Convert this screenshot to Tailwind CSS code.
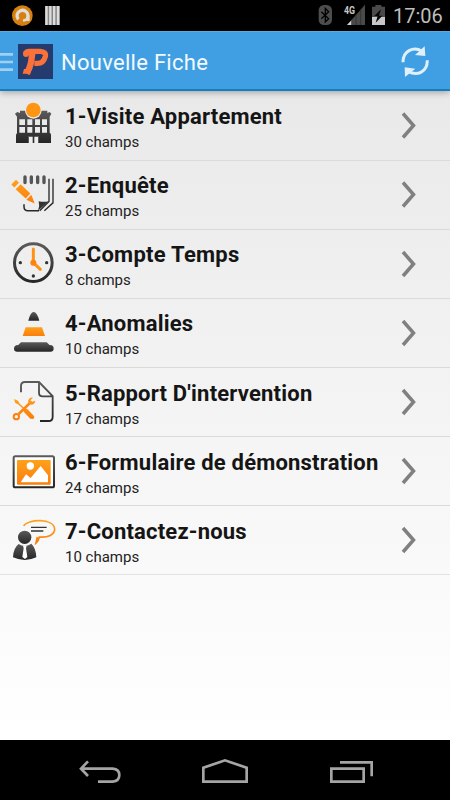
<!DOCTYPE html>
<html lang="fr">
<head>
<meta charset="utf-8">
<title>Nouvelle Fiche</title>
<script src="https://cdn.jsdelivr.net/npm/@tailwindcss/browser@4"></script>
</head>
<body class="font-[Roboto,sans-serif]">
<svg class="absolute w-0 h-0" aria-hidden="true">
  <defs>
    <linearGradient id="d" x1="0" y1="0" x2="0" y2="1"><stop offset="0" stop-color="#5a5a5a"/><stop offset="1" stop-color="#262626"/></linearGradient>
    <linearGradient id="o" x1="0" y1="0" x2="0" y2="1"><stop offset="0" stop-color="#ffa11a"/><stop offset="1" stop-color="#fb7d0c"/></linearGradient>
  </defs>
</svg>
<div class="flex h-[800px] w-[450px] flex-col overflow-hidden bg-white">
  <div class="flex h-[31px] shrink-0 items-center bg-black text-[#bebebe]">
    <svg class="h-[31px] w-[70px]" viewBox="0 0 210 93">
      <circle cx="67" cy="47" r="31" fill="#d8800f"/>
      <path d="M55 58A16.500 16.500 0 1 1 84 46V63" fill="none" stroke="#e0ddd8" stroke-width="10"/>
      <path d="M84 46A17 17 0 0 1 69 62" fill="none" stroke="#e0ddd8" stroke-width="7"/>
      <path d="M135 18h45v57h-45z" fill="#858585"/>
      <path d="M139.500 18v57M151 18v57M162.500 18v57M174 18v57" stroke="#ddd" stroke-width="7"/>
    </svg>
    <svg class="ml-[230px] h-[31px] w-[90px]" viewBox="225 0 270 93">
      <rect x="281" y="15" width="40" height="60" rx="16" fill="#4d4d4d"/>
      <path d="M289 35l22 21-10 10V25l10 10-22 21" fill="none" stroke="#000" stroke-width="4"/>
      <path d="M420 14V75H366z" fill="#4a4a4a"/>
      <path d="M380 60v15H366z" fill="#d0d0d0"/>
      <path d="M380 58v17M393 43v32M407 28v47" stroke="#292929" stroke-width="2"/>
      <text x="357" y="42" font-family="Roboto,sans-serif" font-size="31" font-weight="700" fill="#c8c8c8" textLength="33" lengthAdjust="spacingAndGlyphs">4G</text>
      <path d="M441 20h10v-5h18v5h11v31h-39z" fill="#4a4a4a"/>
      <path d="M441 51h39v24h-39z" fill="#c8c8c8"/>
      <path d="M468 28l-20 20h10l-6 20 20-21h-10z" fill="#050505"/>
    </svg>
    <div class="ml-[3px] text-[20px] leading-[31px] translate-y-[1px] whitespace-nowrap">17:06</div>
  </div>
  <header class="relative z-10 flex h-[60px] shrink-0 items-center border-t border-b-2 border-t-[#5aacdf] border-b-[#147fbd] bg-[#409fe3] shadow-[0_1px_7px_rgba(0,0,0,0.35)]">
    <svg class="h-[57px] w-[60px] shrink-0" viewBox="0 96 180 171">
      <path d="M0 163h39M0 186h39M0 209h39" stroke="#9fcff1" stroke-width="8"/>
      <rect x="54" y="132" width="105" height="105" fill="#253b6e"/>
      <g fill="none" stroke="#fa7239">
        <path d="M98 152L93 188Q89 206 80 221" stroke-width="19"/>
        <path d="M76 161Q79 154 87 154H120Q139 155 136 169Q131 190 112 190H103" stroke-width="16"/>
      </g>
      <path d="M72 207H94L91 221H68z" fill="#fa7239"/>
      <circle cx="78" cy="162" r="9" fill="#fa7239"/>
    </svg>
    <h1 class="ml-[1px] translate-y-[2px] text-[22px] tracking-[0.28px] font-normal leading-[30px] whitespace-nowrap text-[#f4f9fd]">Nouvelle Fiche</h1>
    <svg class="ml-auto mr-[15px] h-[57px] w-[40px] shrink-0" viewBox="510 96 120 171">
      <g fill="none" stroke="#e0f0fb" stroke-width="9">
        <path d="M534 187C534 151 567 139 591 154"/><path d="M607 181C607 217 577 228 550 215"/>
      </g>
      <path d="M599 139l2 29-31-3zM540 231l-1-29 32 4z" fill="#e0f0fb"/>
    </svg>
  </header>
  <main class="flex h-[649px] shrink-0 flex-col bg-linear-to-b from-[#e9e9e9] to-white">
    <ul class="pt-[0.45px]">
      <li class="flex h-[69.15px] items-center border-b border-[#dadada]">
        <svg class="h-[69px] w-[60px] shrink-0" viewBox="0 3 180 207">
          <path fill="url(#d)" fill-rule="evenodd" d="M45 71L52 66L60 69V62H142V69L149 66L154 71L149 80V129H151L153 134V159H116V138H85V159H48V134L51 129V80zM58 88V105H75V88zM82 88V105H97V88zM105 88V105H120V88zM126 88V105H141V88zM58 111V128H75V111zM82 111V128H97V111zM105 111V128H120V111zM126 111V128H141V111z"/>
          <path d="M85 134h31v25H85z" fill="#333"/>
          <path d="M87 140h11v20H87zM103 140h11v20h-11z" fill="#eee"/>
          <circle cx="100" cy="61" r="25" fill="#ececec"/><circle cx="100" cy="60" r="22" fill="#ff9513"/>
        </svg>
        <div class="ml-[5px] min-w-0 flex-1 translate-y-[2px]"><h2 class="text-[22px] tracking-[0.2px] leading-[28px] font-bold whitespace-nowrap text-[#151515]">1-Visite Appartement</h2><p class="text-[15px] leading-[22px] text-[#222]">30 champs</p></div>
        <svg class="mr-[30px] h-[30px] w-[20px] shrink-0 -translate-y-[0.5px]" viewBox="0 0 20 30"><path d="M3 3L13.500 15L3 27" fill="none" stroke="#808080" stroke-width="3.500"/></svg>
      </li>
      <li class="flex h-[69.15px] items-center border-b border-[#dadada]">
        <svg class="h-[69px] w-[60px] shrink-0" viewBox="0 210.500 180 207">
          <path d="M75 261v17M94 261v17M113 261v17M132 261v17" stroke="#555" stroke-width="10" stroke-linecap="round"/>
          <path d="M72 343v8q0 12 12 12h33" fill="none" stroke="#292929" stroke-width="4.500"/>
          <path d="M147 267v68L119 363M159 267v72L133 363" fill="none" stroke="#292929" stroke-width="4"/>
          <path d="M114 363q6-15 2-29 15 4 30 0z" fill="#333"/>
          <path d="M34 284L48 270L57 279L43 293zM47 298L62 283L91 311L77 326zM79 330L94 315L104 341z" fill="url(#o)"/>
        </svg>
        <div class="ml-[5px] min-w-0 flex-1 translate-y-[2px]"><h2 class="text-[22px] tracking-[0.2px] leading-[28px] font-bold whitespace-nowrap text-[#151515]">2-Enquête</h2><p class="text-[15px] leading-[22px] text-[#222]">25 champs</p></div>
        <svg class="mr-[30px] h-[30px] w-[20px] shrink-0 -translate-y-[0.5px]" viewBox="0 0 20 30"><path d="M3 3L13.500 15L3 27" fill="none" stroke="#808080" stroke-width="3.500"/></svg>
      </li>
      <li class="flex h-[69.15px] items-center border-b border-[#dadada]">
        <svg class="h-[69px] w-[60px] shrink-0" viewBox="0 -2 180 207">
          <circle cx="100" cy="99" r="56.500" fill="none" stroke="url(#d)" stroke-width="9"/>
          <g fill="#333"><circle cx="61" cy="99" r="5"/><circle cx="140" cy="99" r="5"/><circle cx="100" cy="139" r="5"/></g>
          <path d="M100 58V99L121 119" fill="none" stroke="#ff9214" stroke-width="9" stroke-linecap="round"/><circle cx="100" cy="99" r="9" fill="#fd8210"/>
        </svg>
        <div class="ml-[5px] min-w-0 flex-1 translate-y-[2px]"><h2 class="text-[22px] tracking-[0.25px] leading-[28px] font-bold whitespace-nowrap text-[#151515]">3-Compte Temps</h2><p class="text-[15px] leading-[22px] text-[#222]">8 champs</p></div>
        <svg class="mr-[30px] h-[30px] w-[20px] shrink-0" viewBox="0 0 20 30"><path d="M3 3L13.500 15L3 27" fill="none" stroke="#808080" stroke-width="3.500"/></svg>
      </li>
      <li class="flex h-[69.15px] items-center border-b border-[#dadada]">
        <svg class="h-[69px] w-[60px] shrink-0" viewBox="0 205 180 207">
          <path d="M85 273Q91 247 101 247Q111 247 118 273z" fill="url(#d)"/>
          <path d="M77 293H126L135 319H68z" fill="url(#o)"/>
          <path d="M63 338H140Q146 347 156 347Q162 350 161 358Q160 366 152 366H51Q43 366 42 358Q41 350 48 347Q57 347 63 338z" fill="url(#d)"/>
        </svg>
        <div class="ml-[5px] min-w-0 flex-1 translate-y-[2px]"><h2 class="text-[22px] tracking-[0.2px] leading-[28px] font-bold whitespace-nowrap text-[#151515]">4-Anomalies</h2><p class="text-[15px] leading-[22px] text-[#222]">10 champs</p></div>
        <svg class="mr-[30px] h-[30px] w-[20px] shrink-0" viewBox="0 0 20 30"><path d="M3 3L13.500 15L3 27" fill="none" stroke="#808080" stroke-width="3.500"/></svg>
      </li>
      <li class="flex h-[69.15px] items-center border-b border-[#dadada]">
        <svg class="h-[69px] w-[60px] shrink-0" viewBox="0 8 180 207">
          <path d="M63 81V62Q63 50 75 50H117L158 92V154Q158 167 146 167H120M117 50V82Q117 93 128 93H158" fill="none" stroke="url(#d)" stroke-width="5.500"/>
          <path d="M42 101L54 106L59 115L75 130L82 131L101 151Q106 157 98 161L91 160L71 139V132L54 117L46 113z" fill="url(#o)"/>
          <path d="M56 146L91 112" stroke="#fc8711" stroke-width="8"/>
          <circle cx="49" cy="154" r="8" fill="none" stroke="#fb8010" stroke-width="6"/>
          <path d="M99 97Q88 95 85 105Q83 117 94 118Q104 118 106 106L97 109L91 105z" fill="#ff9417"/>
        </svg>
        <div class="ml-[5px] min-w-0 flex-1 translate-y-[3px]"><h2 class="text-[22px] tracking-[0.2px] leading-[28px] font-bold whitespace-nowrap text-[#151515]">5-Rapport D'intervention</h2><p class="text-[15px] leading-[22px] text-[#222]">17 champs</p></div>
        <svg class="mr-[30px] h-[30px] w-[20px] shrink-0" viewBox="0 0 20 30"><path d="M3 3L13.500 15L3 27" fill="none" stroke="#808080" stroke-width="3.500"/></svg>
      </li>
      <li class="flex h-[69.15px] items-center border-b border-[#dadada]">
        <svg class="h-[69px] w-[60px] shrink-0" viewBox="0 215 180 207">
          <rect x="41" y="273" width="121" height="93" rx="5" fill="#fff" stroke="url(#d)" stroke-width="6"/>
          <rect x="51" y="284" width="101" height="74" rx="3" fill="url(#o)"/>
          <circle cx="91" cy="302" r="11" fill="#fff"/><path d="M62 351L78 327L92 338L122 302L144 330V351z" fill="#fff"/>
        </svg>
        <div class="ml-[5px] min-w-0 flex-1 translate-y-[3px]"><h2 class="text-[22px] tracking-[0.2px] leading-[28px] font-bold whitespace-nowrap text-[#151515]">6-Formulaire de démonstration</h2><p class="text-[15px] leading-[22px] text-[#222]">24 champs</p></div>
        <svg class="mr-[30px] h-[30px] w-[20px] shrink-0" viewBox="0 0 20 30"><path d="M3 3L13.500 15L3 27" fill="none" stroke="#808080" stroke-width="3.500"/></svg>
      </li>
      <li class="flex h-[69.15px] items-center border-b border-[#e2e2e2]">
        <svg class="h-[69px] w-[60px] shrink-0" viewBox="0 18 180 207">
          <path d="M71 78C81 57 163 53 164 88C164 104 144 113 118 111Q116 122 108 129L112 111" fill="none" stroke="url(#o)" stroke-width="5"/>
          <path d="M93 82H140M93 93H130" stroke="#333" stroke-width="4"/>
          <circle cx="74" cy="112" r="20" fill="url(#d)"/>
          <path d="M56 132Q74 144 94 131Q108 144 109 172Q75 188 39 172Q40 144 56 132z" fill="url(#d)"/>
          <path d="M69 137H80L78 145L82 171L75 177L67 171L71 145z" fill="#fff"/>
        </svg>
        <div class="ml-[5px] min-w-0 flex-1 translate-y-[3px]"><h2 class="text-[22px] tracking-[0.2px] leading-[28px] font-bold whitespace-nowrap text-[#151515]">7-Contactez-nous</h2><p class="text-[15px] leading-[22px] text-[#222]">10 champs</p></div>
        <svg class="mr-[30px] h-[30px] w-[20px] shrink-0" viewBox="0 0 20 30"><path d="M3 3L13.500 15L3 27" fill="none" stroke="#808080" stroke-width="3.500"/></svg>
      </li>
    </ul>
  </main>
  <nav class="flex h-[60px] shrink-0 justify-center bg-black">
    <svg class="h-[60px] w-[330px]" viewBox="0 0 990 180" fill="none" stroke="#a5a5a5" stroke-width="8">
      <path d="M62 86H158Q178 88 178 105Q178 123 158 125H114M84 64L63 86L84 108"/>
      <path d="M430 125V83L495 61L560 83V125z"/>
      <path d="M814 86H911V125H814zM840 67H935V109"/>
    </svg>
  </nav>
</div>
</body>
</html>
